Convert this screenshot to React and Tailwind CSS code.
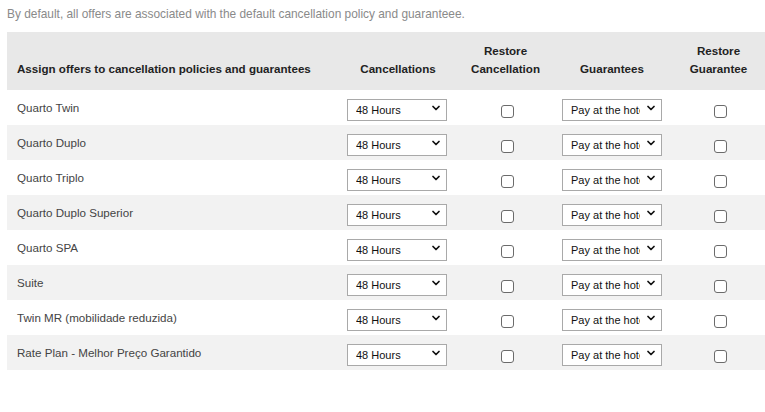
import React from "react";
import { ChevronDown } from "lucide-react";

const offers = [
  "Quarto Twin",
  "Quarto Duplo",
  "Quarto Triplo",
  "Quarto Duplo Superior",
  "Quarto SPA",
  "Suite",
  "Twin MR (mobilidade reduzida)",
  "Rate Plan - Melhor Preço Garantido",
];

function Select({ value, options }) {
  return (
    <div className="relative w-[100px] h-[22px]">
      <select
        defaultValue={value}
        className="appearance-none w-full h-full bg-white border border-[#a9a9a9] rounded-none pl-[8px] pr-[21px] text-[11px] text-[#111] outline-none"
      >
        {options.map((o) => (
          <option key={o}>{o}</option>
        ))}
      </select>
      <ChevronDown
        size={12}
        strokeWidth={3.5}
        className="absolute right-[5px] top-[5px] text-[#111] pointer-events-none"
      />
    </div>
  );
}

function Check() {
  return (
    <input
      type="checkbox"
      className="appearance-none w-[13px] h-[13px] bg-white border border-[#6b6b6b] rounded-[3px] mt-[7px]"
    />
  );
}

export default function App() {
  return (
    <div className="bg-white w-[765px] h-[412px] pl-[7px] pt-[6px] font-['Liberation_Sans',Arial,sans-serif]">
      <p className="text-[11.9px] text-[#8a8a8a] leading-[16px]">
        By default, all offers are associated with the default cancellation policy and guaranteee.
      </p>
      <table className="mt-[10px] w-[758px] border-collapse table-fixed">
        <colgroup>
          <col className="w-[330px]" />
          <col className="w-[122px]" />
          <col className="w-[93px]" />
          <col className="w-[120px]" />
          <col className="w-[93px]" />
        </colgroup>
        <thead>
          <tr className="bg-[#e8e8e8] h-[58px] text-[11.6px] font-bold text-[#222] leading-[18px]">
            <th className="text-left align-bottom pl-[10px] pb-[12px]">
              Assign offers to cancellation policies and guarantees
            </th>
            <th className="text-center align-bottom pb-[12px]">Cancellations</th>
            <th className="text-center align-bottom pb-[12px]">
              Restore
              <br />
              Cancellation
            </th>
            <th className="text-center align-bottom pb-[12px]">Guarantees</th>
            <th className="text-center align-bottom pb-[12px]">
              Restore
              <br />
              Guarantee
            </th>
          </tr>
        </thead>
        <tbody>
          {offers.map((name, i) => (
            <tr key={name} className={`h-[35px] ${i % 2 === 1 ? "bg-[#f2f2f2]" : "bg-white"}`}>
              <td className="pl-[10px] text-[11.6px] text-[#444] align-middle">{name}</td>
              <td className="pl-[10px] align-middle">
                <Select value="48 Hours" options={["48 Hours", "24 Hours", "72 Hours", "Non refundable"]} />
              </td>
              <td className="align-middle">
                <div className="flex justify-center pl-[4px]">
                  <Check />
                </div>
              </td>
              <td className="pl-[10px] align-middle">
                <Select value="Pay at the hotel" options={["Pay at the hotel", "Credit card", "Prepayment"]} />
              </td>
              <td className="align-middle">
                <div className="flex justify-center pl-[4px]">
                  <Check />
                </div>
              </td>
            </tr>
          ))}
        </tbody>
      </table>
    </div>
  );
}
